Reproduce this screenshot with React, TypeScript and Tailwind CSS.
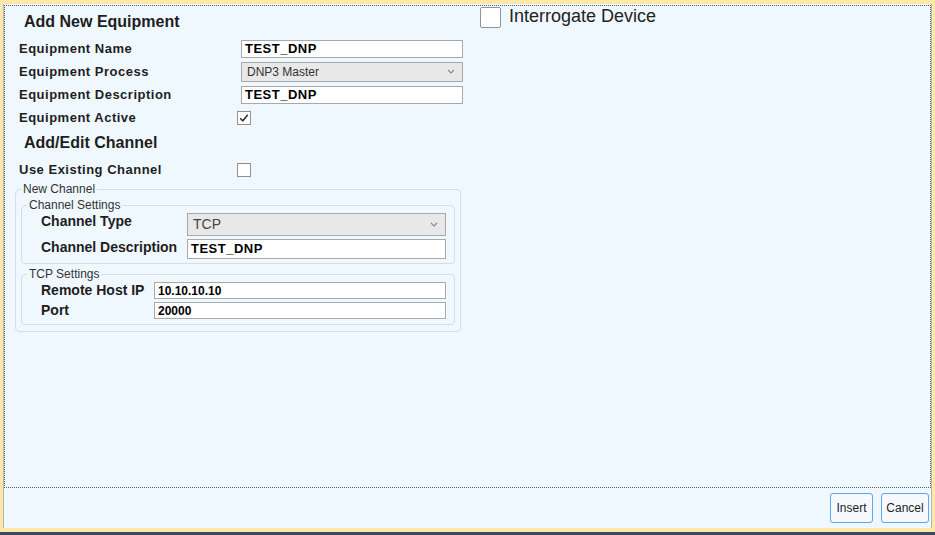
import React from "react";

function Chevron() {
  return (
    <svg width="8" height="5" viewBox="0 0 8 5" className="shrink-0">
      <path d="M1 1 L4 4 L7 1" fill="none" stroke="#8a8a8a" strokeWidth="1.1" />
    </svg>
  );
}

function CheckBox({ checked }: { checked?: boolean }) {
  return (
    <span className="w-[14px] h-[14px] border border-[#8f8f8f] bg-white flex items-center justify-center shrink-0">
      {checked && (
        <svg width="12" height="12" viewBox="0 0 12 12">
          <path d="M2.2 6.2 L4.8 8.8 L9.8 2.8" fill="none" stroke="#333" strokeWidth="1.6" />
        </svg>
      )}
    </span>
  );
}

function TextBox({ value, w, h, size = "text-[13px] tracking-[0.5px]" }: { value: string; w: string; h: string; size?: string }) {
  return (
    <div className={`${w} ${h} border border-[#a9a9a9] bg-white px-[3px] flex items-center font-bold text-black ${size}`}>
      {value}
    </div>
  );
}

function SelectBox({ value, w, h, size }: { value: string; w: string; h: string; size: string }) {
  return (
    <div className={`${w} ${h} border border-[#a9a9a9] bg-[#e8e8e8] pl-[5px] pr-[7px] flex items-center justify-between ${size}`}>
      <span>{value}</span>
      <Chevron />
    </div>
  );
}

const rows = [
  { label: "Equipment Name", kind: "text", value: "TEST_DNP" },
  { label: "Equipment Process", kind: "select", value: "DNP3 Master" },
  { label: "Equipment Description", kind: "text", value: "TEST_DNP" },
  { label: "Equipment Active", kind: "check", value: "" },
];

export default function App() {
  return (
    <div className="w-[935px] h-[535px] bg-[#fde8a9] flex flex-col pt-[4px] px-[3px] pb-[4px] border-b-[3px] border-[#3b4763] font-['Liberation_Sans',Arial,sans-serif] text-[#1e1e1e]">
      <div className="flex-1 flex flex-col bg-[#f0f8ff] border-x border-[#b4b4b4]">
        <div className="mt-[1px] h-[483px] border border-dotted border-[#5a5a5a] flex">
          {/* left column: equipment + channel form */}
          <div className="w-[475px] pl-[10px]">
            <div className="pl-[9px] mt-[7px] text-[16px] leading-[18px] font-bold">Add New Equipment</div>
            <div className="mt-[6px]">
              {rows.map((r) => (
                <div key={r.label} className="h-[23px] flex items-center pl-[4px]">
                  <span className="w-[218px] text-[13px] tracking-[0.5px] font-bold">{r.label}</span>
                  {r.kind === "text" && (
                    <div className="ml-[4px]">
                      <TextBox value={r.value} w="w-[222px]" h="h-[18px]" />
                    </div>
                  )}
                  {r.kind === "select" && (
                    <div className="ml-[4px]">
                      <SelectBox value={r.value} w="w-[222px]" h="h-[20px]" size="text-[12px] text-[#333]" />
                    </div>
                  )}
                  {r.kind === "check" && <CheckBox checked />}
                </div>
              ))}
            </div>

            <div className="pl-[9px] mt-[5px] text-[16px] leading-[18px] font-bold">Add/Edit Channel</div>
            <div className="mt-[6px] h-[23px] flex items-center pl-[4px]">
              <span className="w-[218px] text-[13px] tracking-[0.5px] font-bold">Use Existing Channel</span>
              <CheckBox />
            </div>

            <fieldset className="mt-[1px] w-[446px] border border-[#d5dde6] rounded-[4px] px-[5px] pb-[6px]">
              <legend className="px-[2px] text-[12px] leading-[14px] text-[#333]">New Channel</legend>

              <fieldset className="mt-[2px] border border-[#d5dde6] rounded-[4px] px-[5px] pb-[4px]">
                <legend className="px-[2px] text-[12px] leading-[14px] text-[#333]">Channel Settings</legend>
                <div className="pl-[14px] pt-[1px]">
                  <div className="flex items-start">
                    <span className="w-[146px] text-[14px] leading-[16px] font-bold">Channel Type</span>
                    <SelectBox value="TCP" w="w-[259px]" h="h-[23px]" size="text-[14px] text-[#444]" />
                  </div>
                  <div className="flex items-start mt-[3px]">
                    <span className="w-[146px] text-[14px] leading-[16px] font-bold">Channel Description</span>
                    <TextBox value="TEST_DNP" w="w-[259px]" h="h-[20px]" />
                  </div>
                </div>
              </fieldset>

              <fieldset className="mt-[3px] border border-[#d5dde6] rounded-[4px] px-[5px] pb-[5px]">
                <legend className="px-[2px] text-[12px] leading-[14px] text-[#333]">TCP Settings</legend>
                <div className="pl-[14px] pt-[1px]">
                  <div className="flex items-center">
                    <span className="w-[113px] text-[14px] leading-[17px] font-bold">Remote Host IP</span>
                    <TextBox value="10.10.10.10" w="w-[292px]" h="h-[17px]" size="text-[12px]" />
                  </div>
                  <div className="flex items-center mt-[3px]">
                    <span className="w-[113px] text-[14px] leading-[17px] font-bold">Port</span>
                    <TextBox value="20000" w="w-[292px]" h="h-[17px]" size="text-[12px]" />
                  </div>
                </div>
              </fieldset>
            </fieldset>
          </div>

          {/* right column */}
          <div className="pt-[1px] flex items-start gap-[8px]">
            <span className="w-[21px] h-[21px] border border-[#939393] rounded-[2px] bg-white" />
            <span className="text-[18px] leading-[18px] text-[#222]">Interrogate Device</span>
          </div>
        </div>

        <div className="flex justify-end gap-[8px] pt-[5px] pr-[2px]">
          <button className="w-[43px] h-[30px] border border-[#5ea5f3] rounded-[3px] bg-[#f6faff] text-[12px] text-[#222]">
            Insert
          </button>
          <button className="w-[48px] h-[30px] border border-[#5ea5f3] rounded-[3px] bg-[#f6faff] text-[12px] text-[#222]">
            Cancel
          </button>
        </div>
      </div>
    </div>
  );
}
